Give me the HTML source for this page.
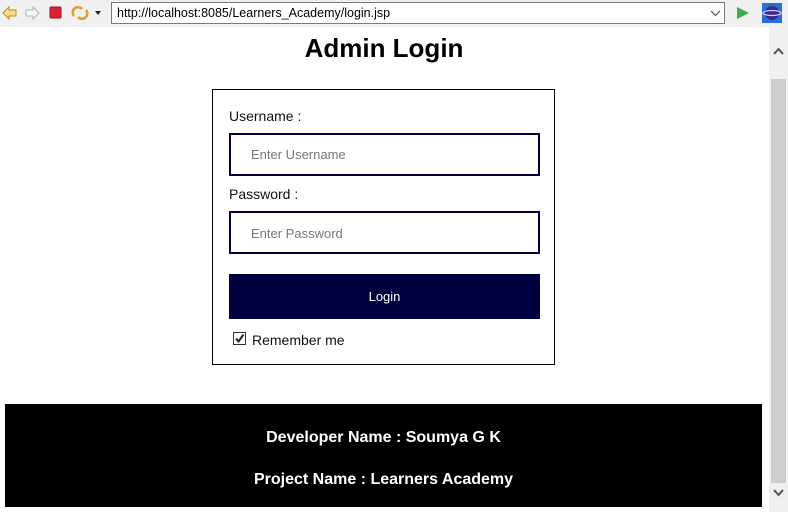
<!DOCTYPE html>
<html><head><meta charset="utf-8"><style>
*{margin:0;padding:0;box-sizing:border-box}
body{width:788px;height:512px;overflow:hidden;background:#fff;font-family:"Liberation Sans",sans-serif;position:relative}
.tb{position:absolute;left:0;top:0;width:788px;height:27px;background:#f0f0f0}
.url{position:absolute;left:111px;top:2px;width:614px;height:22px;border:1px solid #7a7a7a;background:#fff;font-size:12.5px;line-height:20px;padding-left:5px;color:#000}
.sb{position:absolute;left:769px;top:27px;width:19px;height:485px;background:#f0f0f0}
.thumb{position:absolute;left:2px;top:52px;width:15px;height:404px;background:#cdcdcd}
h1{position:absolute;left:0;width:768px;top:33px;text-align:center;font-size:26px;font-weight:bold;color:#000}
.box{position:absolute;left:212px;top:89px;width:343px;height:276px;border:1px solid #000}
.lbl{position:absolute;left:16px;font-size:14px;color:#111}
.inp{position:absolute;left:16px;width:311px;height:43px;border:2px solid #000040;font-size:13px;color:#777;padding-left:20px;line-height:39px}
.btn{position:absolute;left:16px;top:184px;width:311px;height:45px;background:#000040;color:#fff;font-size:13px;text-align:center;line-height:45px}
.cb{position:absolute;left:20px;top:242px;width:13px;height:13px;border:1px solid #333;background:#fff}
.foot{position:absolute;left:5px;top:404px;width:757px;height:103px;background:#000;color:#fff;font-weight:bold;font-size:16px;text-align:center}
</style></head><body>
<div class="tb">
<svg width="110" height="27" style="position:absolute;left:0;top:0">
<path d="M3 13 L9 7 L9 10 L16 10 L16 16 L9 16 L9 19 Z" fill="#f8e08a" stroke="#c08a20" stroke-width="1"/>
<path d="M39 13 L33 7 L33 10 L26 10 L26 16 L33 16 L33 19 Z" fill="#fafafa" stroke="#b0b0b0" stroke-width="1"/>
<rect x="50" y="7" width="11" height="11" rx="1" fill="#e02030" stroke="#a01020"/>
<path d="M74 16 a5 5 0 0 1 8 -7 M86 10 a5 5 0 0 1 -8 7" fill="none" stroke="#e0a030" stroke-width="2.5"/>
<path d="M95 11 L101 11 L98 15 Z" fill="#222"/>
</svg>
<div class="url">http://localhost:8085/Learners_Academy/login.jsp
<svg width="12" height="8" style="position:absolute;left:598px;top:7px"><path d="M1 1 L5.5 5.5 L10 1" fill="none" stroke="#555" stroke-width="1.2"/></svg></div>
<svg width="60" height="27" style="position:absolute;left:728px;top:0">
<path d="M9 7 L21 13 L9 19 Z" fill="#3cae4c"/>
<rect x="34" y="3" width="20" height="20" fill="#2a6fd8"/>
<circle cx="44" cy="13" r="7" fill="#3a2a8a"/>
<ellipse cx="44" cy="13" rx="9" ry="2.5" fill="none" stroke="#d9c8ff" stroke-width="1.2"/>
</svg>
</div>
<div class="sb"><svg width="19" height="485" style="position:absolute;left:0;top:0"><path d="M5 27 L9.5 22 L14 27" fill="none" stroke="#555" stroke-width="2"/><path d="M5 463 L9.5 468 L14 463" fill="none" stroke="#555" stroke-width="2"/></svg><div class="thumb"></div></div>
<h1>Admin Login</h1>
<div class="box">
<div class="lbl" style="top:18px">Username :</div>
<div class="inp" style="top:43px">Enter Username</div>
<div class="lbl" style="top:96px">Password :</div>
<div class="inp" style="top:121px;line-height:41px">Enter Password</div>
<div class="btn">Login</div>
<div class="cb"><svg width="11" height="11" style="position:absolute;left:0;top:0"><path d="M2 5.5 L4.5 8.5 L9.5 1.5" fill="none" stroke="#222" stroke-width="2"/></svg></div>
<div class="lbl" style="top:242px;left:39px">Remember me</div>
</div>
<div class="foot"><div style="position:absolute;top:25px;width:100%">Developer Name : Soumya G K</div><div style="position:absolute;top:67px;width:100%">Project Name : Learners Academy</div></div>
</body></html>
